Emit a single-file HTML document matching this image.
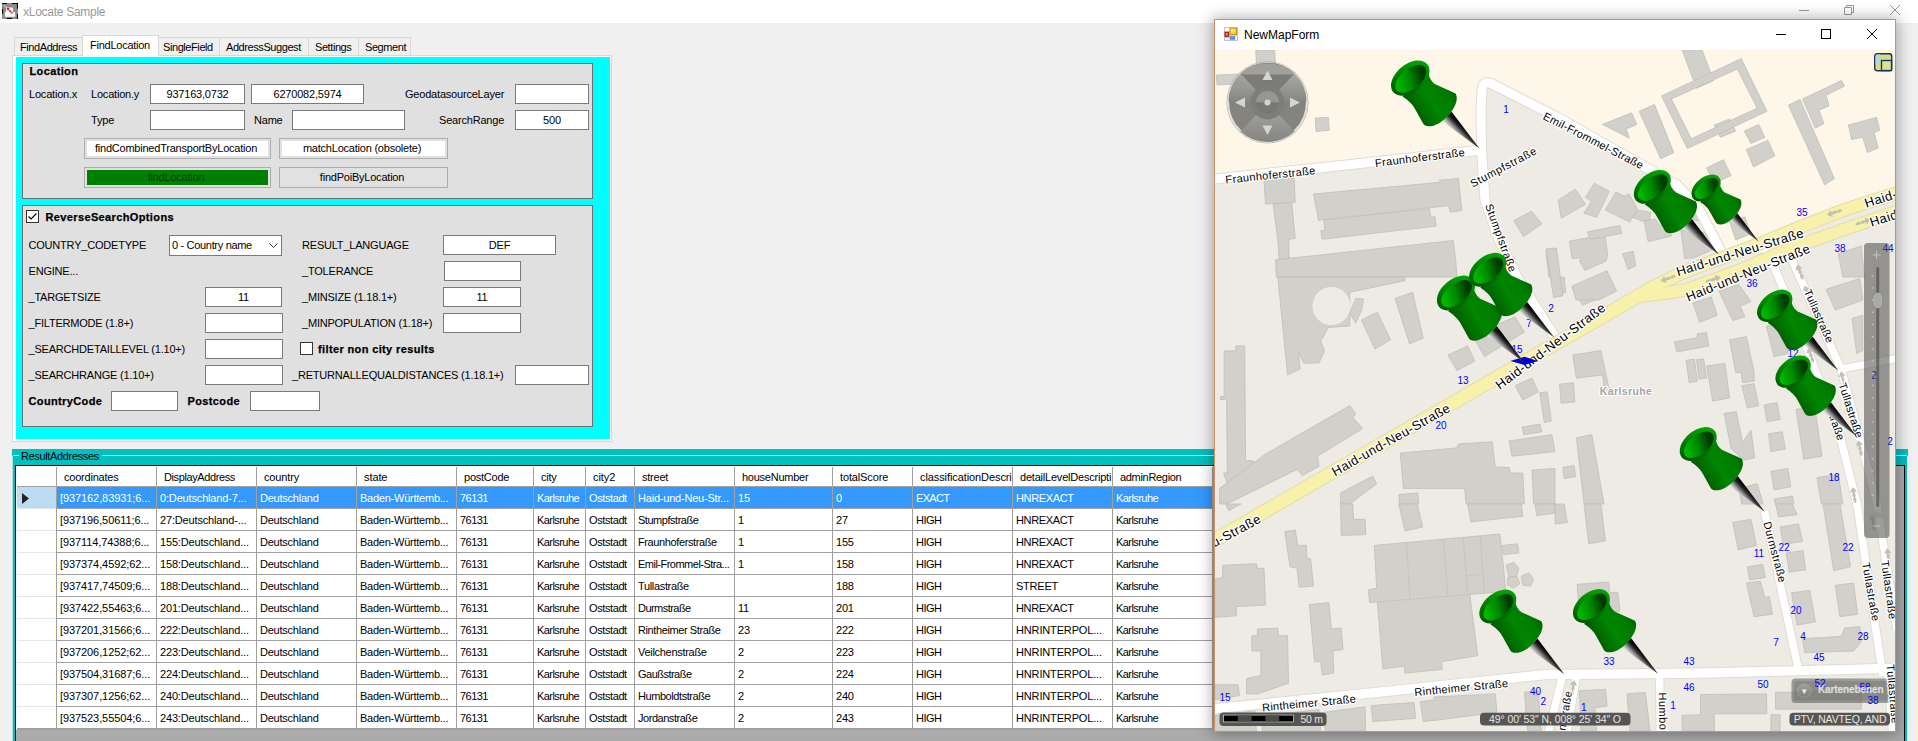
<!DOCTYPE html>
<html><head><meta charset="utf-8"><title>xLocate Sample</title>
<style>
html,body{margin:0;padding:0}
body{width:1918px;height:741px;overflow:hidden;position:relative;background:#f0f0f0;font-family:"Liberation Sans",sans-serif;font-size:11px;color:#000}
.t{position:absolute;white-space:pre;line-height:14px;height:14px;font-size:11px;letter-spacing:-0.2px}
.b{font-weight:bold;letter-spacing:0.37px;-webkit-text-stroke:0.25px #000}
.gb{position:absolute;background:#e0e0e0;border:1px solid #6e6e6e;box-sizing:border-box}
.tb{position:absolute;background:#fff;border:1px solid #7a7a7a;text-align:center;line-height:18px;font-size:11px;letter-spacing:-0.2px;white-space:pre;overflow:hidden}
.btn{position:absolute;background:#e1e1e1;border:1px solid #adadad;box-sizing:border-box;font-size:11px;letter-spacing:-0.22px;white-space:pre}
.cb{position:absolute;width:11px;height:11px;border:1px solid #333;background:#fff}
.hc{position:absolute;background:#fff;overflow:hidden;white-space:pre;letter-spacing:-0.2px}
.hc span{position:absolute;top:4px;line-height:14px}
.rc{position:absolute;overflow:hidden;white-space:pre;letter-spacing:-0.17px}
.rc span{position:absolute;left:3px;top:4px;line-height:14px}
</style></head><body>
<div style="position:absolute;left:0;top:0;width:1918px;height:23px;background:#fff"></div>
<svg style="position:absolute;left:2px;top:3px" width="16" height="16" viewBox="0 0 16 16">
<rect width="16" height="16" fill="#8c8c8c"/>
<path d="M0,0.5 H4.8 M10.1,0.5 H16 M15.5,0 V5.7 M15.5,11.2 V16 M4.9,15.5 H10 M15,15.5 H16 M0.5,6.1 V10.8" stroke="#000" stroke-width="1.1" fill="none"/>
<rect x="2.9" y="9.1" width="10.3" height="4.7" fill="#fff"/><rect x="4.1" y="4.6" width="6.9" height="4.6" fill="#fff"/>
<path d="M2,2.3 L5,5.2" stroke="#e6e6e6" stroke-width="1"/>
<path d="M5.2,5.4 L10.4,10.3" stroke="#e8101c" stroke-width="1.7" stroke-dasharray="2.2 0.7"/><rect x="4.9" y="5" width="2.4" height="1.6" fill="#e8101c"/>
</svg>
<div class="t" style="left:23px;top:5px;font-size:12px;line-height:15px;color:#999;letter-spacing:-0.27px">xLocate Sample</div>
<svg style="position:absolute;left:1790px;top:0" width="120" height="22" viewBox="0 0 120 22" fill="none" stroke="#999" stroke-width="1">
<path d="M9 10.5 H19"/>
<path d="M54.5 7.5 H61.5 V14.5 H54.5 Z M56.5 7.5 V5.5 H63.5 V12.5 H61.5"/>
<path d="M100 5 L110 15 M110 5 L100 15"/></svg>
<div style="position:absolute;left:14px;top:37px;width:69px;height:18px;border:1px solid #d9d9d9;border-bottom:none;box-sizing:border-box;background:#f0f0f0"></div>
<div class="t " style="left:20px;top:39.5px;letter-spacing:-0.42px">FindAddress</div>
<div style="position:absolute;left:158px;top:37px;width:62px;height:18px;border:1px solid #d9d9d9;border-bottom:none;box-sizing:border-box;background:#f0f0f0"></div>
<div class="t " style="left:163px;top:39.5px;letter-spacing:-0.42px">SingleField</div>
<div style="position:absolute;left:219px;top:37px;width:90px;height:18px;border:1px solid #d9d9d9;border-bottom:none;box-sizing:border-box;background:#f0f0f0"></div>
<div class="t " style="left:226px;top:39.5px;letter-spacing:-0.42px">AddressSuggest</div>
<div style="position:absolute;left:308px;top:37px;width:51px;height:18px;border:1px solid #d9d9d9;border-bottom:none;box-sizing:border-box;background:#f0f0f0"></div>
<div class="t " style="left:315px;top:39.5px;letter-spacing:-0.42px">Settings</div>
<div style="position:absolute;left:358px;top:37px;width:53px;height:18px;border:1px solid #d9d9d9;border-bottom:none;box-sizing:border-box;background:#f0f0f0"></div>
<div class="t " style="left:365px;top:39.5px;letter-spacing:-0.42px">Segment</div>
<div style="position:absolute;left:12px;top:55px;width:600px;height:387px;border:1px solid #d9d9d9;box-sizing:border-box;background:#fff"></div>
<div style="position:absolute;left:82px;top:35px;width:77px;height:21px;border:1px solid #d9d9d9;border-bottom:none;box-sizing:border-box;background:#fff"></div>
<div class="t " style="left:90px;top:37.5px;letter-spacing:-0.25px">FindLocation</div>
<div style="position:absolute;left:16px;top:57px;width:594px;height:382px;background:#00ffff"></div>
<div class="gb" style="left:22px;top:63px;width:571px;height:136px"></div>
<div class="gb" style="left:22px;top:205px;width:571px;height:222px"></div>
<div class="t b" style="left:29.5px;top:64px;">Location</div>
<div class="t " style="left:29px;top:87px;">Location.x</div>
<div class="t " style="left:91px;top:87px;">Location.y</div>
<div class="tb" style="left:150px;top:84px;width:93px;height:18px">937163,0732</div>
<div class="tb" style="left:251px;top:84px;width:111px;height:18px">6270082,5974</div>
<div class="t " style="left:405px;top:87px;">GeodatasourceLayer</div>
<div class="tb" style="left:515px;top:84px;width:72px;height:18px"></div>
<div class="t " style="left:91px;top:113px;">Type</div>
<div class="tb" style="left:150px;top:110px;width:93px;height:18px"></div>
<div class="t " style="left:254px;top:113px;">Name</div>
<div class="tb" style="left:292px;top:110px;width:111px;height:18px"></div>
<div class="t " style="left:439px;top:113px;">SearchRange</div>
<div class="tb" style="left:515px;top:110px;width:72px;height:18px">500</div>
<div class="btn" style="left:84px;top:138px;width:187px;height:21px"><div style="position:absolute;left:2px;top:2px;right:2px;bottom:2px;background:#fff;color:#000;text-align:center;line-height:15px;padding-right:3px">findCombinedTransportByLocation</div></div>
<div class="btn" style="left:279px;top:138px;width:169px;height:21px"><div style="position:absolute;left:2px;top:2px;right:2px;bottom:2px;background:#fff;color:#000;text-align:center;line-height:15px;padding-right:3px">matchLocation (obsolete)</div></div>
<div class="btn" style="left:84px;top:167px;width:187px;height:21px"><div style="position:absolute;left:2px;top:2px;right:2px;bottom:2px;background:#008000;color:#003f00;text-align:center;line-height:15px;padding-right:3px">findLocation</div></div>
<div class="btn" style="left:279px;top:167px;width:169px;height:21px"><div style="position:absolute;left:2px;top:2px;right:2px;bottom:2px;background:#e1e1e1;color:#000;text-align:center;line-height:15px;padding-right:3px">findPoiByLocation</div></div>
<div class="cb" style="left:26px;top:210px"><svg width="11" height="11" viewBox="0 0 11 11"><path d="M1.5 5.5 L4 8 L9.5 2.5" fill="none" stroke="#000" stroke-width="1.1"/></svg></div>
<div class="t b" style="left:45.5px;top:210px;">ReverseSearchOptions</div>
<div class="t " style="left:28.5px;top:238px;">COUNTRY_CODETYPE</div>
<div class="tb" style="left:169px;top:235px;width:111px;height:19px;text-align:left"><span style="position:absolute;left:2px;top:0;letter-spacing:-0.32px">0 - Country name</span><svg style="position:absolute;right:3px;top:7px" width="9" height="6" viewBox="0 0 9 6"><path d="M0.5 0.5 L4.5 4.5 L8.5 0.5" fill="none" stroke="#333" stroke-width="1"/></svg></div>
<div class="t " style="left:302px;top:238px;">RESULT_LANGUAGE</div>
<div class="tb" style="left:443px;top:235px;width:111px;height:18px">DEF</div>
<div class="t " style="left:28.5px;top:264px;">ENGINE...</div>
<div class="t " style="left:302px;top:264px;">_TOLERANCE</div>
<div class="tb" style="left:444px;top:261px;width:75px;height:18px"></div>
<div class="t " style="left:28.5px;top:290px;">_TARGETSIZE</div>
<div class="tb" style="left:205px;top:287px;width:75px;height:18px">11</div>
<div class="t " style="left:302px;top:290px;">_MINSIZE (1.18.1+)</div>
<div class="tb" style="left:443px;top:287px;width:76px;height:18px">11</div>
<div class="t " style="left:28.5px;top:316px;">_FILTERMODE (1.8+)</div>
<div class="tb" style="left:205px;top:313px;width:76px;height:18px"></div>
<div class="t " style="left:302px;top:316px;">_MINPOPULATION (1.18+)</div>
<div class="tb" style="left:443px;top:313px;width:76px;height:18px"></div>
<div class="t " style="left:28.5px;top:342px;">_SEARCHDETAILLEVEL (1.10+)</div>
<div class="tb" style="left:205px;top:339px;width:76px;height:18px"></div>
<div class="cb" style="left:300px;top:342px"></div>
<div class="t b" style="left:318px;top:342px;">filter non city results</div>
<div class="t " style="left:28.5px;top:368px;">_SEARCHRANGE (1.10+)</div>
<div class="tb" style="left:205px;top:365px;width:76px;height:18px"></div>
<div class="t " style="left:292px;top:368px;">_RETURNALLEQUALDISTANCES (1.18.1+)</div>
<div class="tb" style="left:515px;top:365px;width:72px;height:18px"></div>
<div class="t b" style="left:28.5px;top:394px;">CountryCode</div>
<div class="tb" style="left:111px;top:391px;width:65px;height:18px"></div>
<div class="t b" style="left:187.5px;top:394px;">Postcode</div>
<div class="tb" style="left:250px;top:391px;width:68px;height:18px"></div>
<div style="position:absolute;left:12px;top:449px;width:1896px;height:7px;background:#00c0c0"></div>
<div style="position:absolute;left:13px;top:455px;width:1894px;height:286px;background:#00c0c0"></div>
<div style="position:absolute;left:13px;top:455px;width:1894px;height:1px;background:#d8dede"></div>
<div style="position:absolute;left:12px;top:456px;width:1px;height:285px;background:#a8e2e2"></div>
<div style="position:absolute;left:19px;top:449px;width:83px;height:13px;background:#00c0c0"></div>
<div class="t " style="left:21px;top:449px;letter-spacing:-0.35px">ResultAddresses</div>
<div style="position:absolute;left:15px;top:465px;width:1890px;height:276px;background:#ababab;border:1px solid #000;border-bottom:none;box-sizing:border-box"></div>
<div style="position:absolute;left:16px;top:466px;width:1197px;height:264px;background:#a0a0a0"></div>
<div style="position:absolute;left:17px;top:466px;width:1196px;height:1px;background:#fff;z-index:2"></div>
<div class="hc" style="left:17px;top:466px;width:39px;height:20px"><span style="left:0px;letter-spacing:-0.2px"></span></div>
<div class="hc" style="left:57px;top:466px;width:99px;height:20px"><span style="left:7px;letter-spacing:-0.21px">coordinates</span></div>
<div class="hc" style="left:157px;top:466px;width:99px;height:20px"><span style="left:7px;letter-spacing:-0.39px">DisplayAddress</span></div>
<div class="hc" style="left:257px;top:466px;width:99px;height:20px"><span style="left:7px;letter-spacing:-0.13px">country</span></div>
<div class="hc" style="left:357px;top:466px;width:99px;height:20px"><span style="left:7px;letter-spacing:-0.09px">state</span></div>
<div class="hc" style="left:457px;top:466px;width:76px;height:20px"><span style="left:7px;letter-spacing:-0.23px">postCode</span></div>
<div class="hc" style="left:534px;top:466px;width:51px;height:20px"><span style="left:7px;letter-spacing:-0.23px">city</span></div>
<div class="hc" style="left:586px;top:466px;width:48px;height:20px"><span style="left:7px;letter-spacing:-0.08px">city2</span></div>
<div class="hc" style="left:635px;top:466px;width:99px;height:20px"><span style="left:7px;letter-spacing:-0.22px">street</span></div>
<div class="hc" style="left:735px;top:466px;width:97px;height:20px"><span style="left:7px;letter-spacing:-0.25px">houseNumber</span></div>
<div class="hc" style="left:833px;top:466px;width:79px;height:20px"><span style="left:7px;letter-spacing:-0.14px">totalScore</span></div>
<div class="hc" style="left:913px;top:466px;width:99px;height:20px"><span style="left:7px;letter-spacing:-0.09px">classificationDescri</span></div>
<div class="hc" style="left:1013px;top:466px;width:99px;height:20px"><span style="left:7px;letter-spacing:-0.21px">detailLevelDescripti</span></div>
<div class="hc" style="left:1113px;top:466px;width:99px;height:20px"><span style="left:7px;letter-spacing:-0.31px">adminRegion</span></div>
<div style="position:absolute;left:16px;top:466px;width:1px;height:264px;background:#fff"></div>
<div class="rc" style="left:17px;top:487px;width:39px;height:21px;background:#bcdcf4;border-bottom:1px solid #e6e6e6"></div>
<div class="rc" style="left:57px;top:487px;width:99px;height:21px;background:#3399ff;color:#fff"><span style="letter-spacing:-0.09px">[937162,83931;6...</span></div>
<div class="rc" style="left:157px;top:487px;width:99px;height:21px;background:#3399ff;color:#fff"><span style="letter-spacing:-0.16px">0:Deutschland-7...</span></div>
<div class="rc" style="left:257px;top:487px;width:99px;height:21px;background:#3399ff;color:#fff"><span style="letter-spacing:-0.23px">Deutschland</span></div>
<div class="rc" style="left:357px;top:487px;width:99px;height:21px;background:#3399ff;color:#fff"><span style="letter-spacing:-0.24px">Baden-Württemb...</span></div>
<div class="rc" style="left:457px;top:487px;width:76px;height:21px;background:#3399ff;color:#fff"><span style="letter-spacing:-0.55px">76131</span></div>
<div class="rc" style="left:534px;top:487px;width:51px;height:21px;background:#3399ff;color:#fff"><span style="letter-spacing:-0.56px">Karlsruhe</span></div>
<div class="rc" style="left:586px;top:487px;width:48px;height:21px;background:#3399ff;color:#fff"><span style="letter-spacing:-0.4px">Oststadt</span></div>
<div class="rc" style="left:635px;top:487px;width:99px;height:21px;background:#3399ff;color:#fff"><span style="letter-spacing:-0.21px">Haid-und-Neu-Str...</span></div>
<div class="rc" style="left:735px;top:487px;width:97px;height:21px;background:#3399ff;color:#fff"><span style="letter-spacing:-0.2px">15</span></div>
<div class="rc" style="left:833px;top:487px;width:79px;height:21px;background:#3399ff;color:#fff"><span style="letter-spacing:-0.2px">0</span></div>
<div class="rc" style="left:913px;top:487px;width:99px;height:21px;background:#3399ff;color:#fff"><span style="letter-spacing:-0.65px">EXACT</span></div>
<div class="rc" style="left:1013px;top:487px;width:99px;height:21px;background:#3399ff;color:#fff"><span style="letter-spacing:-0.35px">HNREXACT</span></div>
<div class="rc" style="left:1113px;top:487px;width:99px;height:21px;background:#3399ff;color:#fff"><span style="letter-spacing:-0.56px">Karlsruhe</span></div>
<div class="rc" style="left:17px;top:509px;width:39px;height:21px;background:#fff;border-bottom:1px solid #e6e6e6"></div>
<div class="rc" style="left:57px;top:509px;width:99px;height:21px;background:#fff;color:#000"><span style="letter-spacing:-0.09px">[937196,50611;6...</span></div>
<div class="rc" style="left:157px;top:509px;width:99px;height:21px;background:#fff;color:#000"><span style="letter-spacing:-0.16px">27:Deutschland-...</span></div>
<div class="rc" style="left:257px;top:509px;width:99px;height:21px;background:#fff;color:#000"><span style="letter-spacing:-0.23px">Deutschland</span></div>
<div class="rc" style="left:357px;top:509px;width:99px;height:21px;background:#fff;color:#000"><span style="letter-spacing:-0.24px">Baden-Württemb...</span></div>
<div class="rc" style="left:457px;top:509px;width:76px;height:21px;background:#fff;color:#000"><span style="letter-spacing:-0.55px">76131</span></div>
<div class="rc" style="left:534px;top:509px;width:51px;height:21px;background:#fff;color:#000"><span style="letter-spacing:-0.56px">Karlsruhe</span></div>
<div class="rc" style="left:586px;top:509px;width:48px;height:21px;background:#fff;color:#000"><span style="letter-spacing:-0.4px">Oststadt</span></div>
<div class="rc" style="left:635px;top:509px;width:99px;height:21px;background:#fff;color:#000"><span style="letter-spacing:-0.47px">Stumpfstraße</span></div>
<div class="rc" style="left:735px;top:509px;width:97px;height:21px;background:#fff;color:#000"><span style="letter-spacing:-0.2px">1</span></div>
<div class="rc" style="left:833px;top:509px;width:79px;height:21px;background:#fff;color:#000"><span style="letter-spacing:-0.2px">27</span></div>
<div class="rc" style="left:913px;top:509px;width:99px;height:21px;background:#fff;color:#000"><span style="letter-spacing:-0.5px">HIGH</span></div>
<div class="rc" style="left:1013px;top:509px;width:99px;height:21px;background:#fff;color:#000"><span style="letter-spacing:-0.35px">HNREXACT</span></div>
<div class="rc" style="left:1113px;top:509px;width:99px;height:21px;background:#fff;color:#000"><span style="letter-spacing:-0.56px">Karlsruhe</span></div>
<div class="rc" style="left:17px;top:531px;width:39px;height:21px;background:#fff;border-bottom:1px solid #e6e6e6"></div>
<div class="rc" style="left:57px;top:531px;width:99px;height:21px;background:#fff;color:#000"><span style="letter-spacing:-0.09px">[937114,74388;6...</span></div>
<div class="rc" style="left:157px;top:531px;width:99px;height:21px;background:#fff;color:#000"><span style="letter-spacing:-0.16px">155:Deutschland...</span></div>
<div class="rc" style="left:257px;top:531px;width:99px;height:21px;background:#fff;color:#000"><span style="letter-spacing:-0.23px">Deutschland</span></div>
<div class="rc" style="left:357px;top:531px;width:99px;height:21px;background:#fff;color:#000"><span style="letter-spacing:-0.24px">Baden-Württemb...</span></div>
<div class="rc" style="left:457px;top:531px;width:76px;height:21px;background:#fff;color:#000"><span style="letter-spacing:-0.55px">76131</span></div>
<div class="rc" style="left:534px;top:531px;width:51px;height:21px;background:#fff;color:#000"><span style="letter-spacing:-0.56px">Karlsruhe</span></div>
<div class="rc" style="left:586px;top:531px;width:48px;height:21px;background:#fff;color:#000"><span style="letter-spacing:-0.4px">Oststadt</span></div>
<div class="rc" style="left:635px;top:531px;width:99px;height:21px;background:#fff;color:#000"><span style="letter-spacing:-0.39px">Fraunhoferstraße</span></div>
<div class="rc" style="left:735px;top:531px;width:97px;height:21px;background:#fff;color:#000"><span style="letter-spacing:-0.2px">1</span></div>
<div class="rc" style="left:833px;top:531px;width:79px;height:21px;background:#fff;color:#000"><span style="letter-spacing:-0.2px">155</span></div>
<div class="rc" style="left:913px;top:531px;width:99px;height:21px;background:#fff;color:#000"><span style="letter-spacing:-0.5px">HIGH</span></div>
<div class="rc" style="left:1013px;top:531px;width:99px;height:21px;background:#fff;color:#000"><span style="letter-spacing:-0.35px">HNREXACT</span></div>
<div class="rc" style="left:1113px;top:531px;width:99px;height:21px;background:#fff;color:#000"><span style="letter-spacing:-0.56px">Karlsruhe</span></div>
<div class="rc" style="left:17px;top:553px;width:39px;height:21px;background:#fff;border-bottom:1px solid #e6e6e6"></div>
<div class="rc" style="left:57px;top:553px;width:99px;height:21px;background:#fff;color:#000"><span style="letter-spacing:-0.09px">[937374,4592;62...</span></div>
<div class="rc" style="left:157px;top:553px;width:99px;height:21px;background:#fff;color:#000"><span style="letter-spacing:-0.16px">158:Deutschland...</span></div>
<div class="rc" style="left:257px;top:553px;width:99px;height:21px;background:#fff;color:#000"><span style="letter-spacing:-0.23px">Deutschland</span></div>
<div class="rc" style="left:357px;top:553px;width:99px;height:21px;background:#fff;color:#000"><span style="letter-spacing:-0.24px">Baden-Württemb...</span></div>
<div class="rc" style="left:457px;top:553px;width:76px;height:21px;background:#fff;color:#000"><span style="letter-spacing:-0.55px">76131</span></div>
<div class="rc" style="left:534px;top:553px;width:51px;height:21px;background:#fff;color:#000"><span style="letter-spacing:-0.56px">Karlsruhe</span></div>
<div class="rc" style="left:586px;top:553px;width:48px;height:21px;background:#fff;color:#000"><span style="letter-spacing:-0.4px">Oststadt</span></div>
<div class="rc" style="left:635px;top:553px;width:99px;height:21px;background:#fff;color:#000"><span style="letter-spacing:-0.51px">Emil-Frommel-Stra...</span></div>
<div class="rc" style="left:735px;top:553px;width:97px;height:21px;background:#fff;color:#000"><span style="letter-spacing:-0.2px">1</span></div>
<div class="rc" style="left:833px;top:553px;width:79px;height:21px;background:#fff;color:#000"><span style="letter-spacing:-0.2px">158</span></div>
<div class="rc" style="left:913px;top:553px;width:99px;height:21px;background:#fff;color:#000"><span style="letter-spacing:-0.5px">HIGH</span></div>
<div class="rc" style="left:1013px;top:553px;width:99px;height:21px;background:#fff;color:#000"><span style="letter-spacing:-0.35px">HNREXACT</span></div>
<div class="rc" style="left:1113px;top:553px;width:99px;height:21px;background:#fff;color:#000"><span style="letter-spacing:-0.56px">Karlsruhe</span></div>
<div class="rc" style="left:17px;top:575px;width:39px;height:21px;background:#fff;border-bottom:1px solid #e6e6e6"></div>
<div class="rc" style="left:57px;top:575px;width:99px;height:21px;background:#fff;color:#000"><span style="letter-spacing:-0.09px">[937417,74509;6...</span></div>
<div class="rc" style="left:157px;top:575px;width:99px;height:21px;background:#fff;color:#000"><span style="letter-spacing:-0.16px">188:Deutschland...</span></div>
<div class="rc" style="left:257px;top:575px;width:99px;height:21px;background:#fff;color:#000"><span style="letter-spacing:-0.23px">Deutschland</span></div>
<div class="rc" style="left:357px;top:575px;width:99px;height:21px;background:#fff;color:#000"><span style="letter-spacing:-0.24px">Baden-Württemb...</span></div>
<div class="rc" style="left:457px;top:575px;width:76px;height:21px;background:#fff;color:#000"><span style="letter-spacing:-0.55px">76131</span></div>
<div class="rc" style="left:534px;top:575px;width:51px;height:21px;background:#fff;color:#000"><span style="letter-spacing:-0.56px">Karlsruhe</span></div>
<div class="rc" style="left:586px;top:575px;width:48px;height:21px;background:#fff;color:#000"><span style="letter-spacing:-0.4px">Oststadt</span></div>
<div class="rc" style="left:635px;top:575px;width:99px;height:21px;background:#fff;color:#000"><span style="letter-spacing:-0.34px">Tullastraße</span></div>
<div class="rc" style="left:735px;top:575px;width:97px;height:21px;background:#fff;color:#000"><span style="letter-spacing:-0.2px"></span></div>
<div class="rc" style="left:833px;top:575px;width:79px;height:21px;background:#fff;color:#000"><span style="letter-spacing:-0.2px">188</span></div>
<div class="rc" style="left:913px;top:575px;width:99px;height:21px;background:#fff;color:#000"><span style="letter-spacing:-0.5px">HIGH</span></div>
<div class="rc" style="left:1013px;top:575px;width:99px;height:21px;background:#fff;color:#000"><span style="letter-spacing:-0.24px">STREET</span></div>
<div class="rc" style="left:1113px;top:575px;width:99px;height:21px;background:#fff;color:#000"><span style="letter-spacing:-0.56px">Karlsruhe</span></div>
<div class="rc" style="left:17px;top:597px;width:39px;height:21px;background:#fff;border-bottom:1px solid #e6e6e6"></div>
<div class="rc" style="left:57px;top:597px;width:99px;height:21px;background:#fff;color:#000"><span style="letter-spacing:-0.09px">[937422,55463;6...</span></div>
<div class="rc" style="left:157px;top:597px;width:99px;height:21px;background:#fff;color:#000"><span style="letter-spacing:-0.16px">201:Deutschland...</span></div>
<div class="rc" style="left:257px;top:597px;width:99px;height:21px;background:#fff;color:#000"><span style="letter-spacing:-0.23px">Deutschland</span></div>
<div class="rc" style="left:357px;top:597px;width:99px;height:21px;background:#fff;color:#000"><span style="letter-spacing:-0.24px">Baden-Württemb...</span></div>
<div class="rc" style="left:457px;top:597px;width:76px;height:21px;background:#fff;color:#000"><span style="letter-spacing:-0.55px">76131</span></div>
<div class="rc" style="left:534px;top:597px;width:51px;height:21px;background:#fff;color:#000"><span style="letter-spacing:-0.56px">Karlsruhe</span></div>
<div class="rc" style="left:586px;top:597px;width:48px;height:21px;background:#fff;color:#000"><span style="letter-spacing:-0.4px">Oststadt</span></div>
<div class="rc" style="left:635px;top:597px;width:99px;height:21px;background:#fff;color:#000"><span style="letter-spacing:-0.54px">Durmstraße</span></div>
<div class="rc" style="left:735px;top:597px;width:97px;height:21px;background:#fff;color:#000"><span style="letter-spacing:-0.2px">11</span></div>
<div class="rc" style="left:833px;top:597px;width:79px;height:21px;background:#fff;color:#000"><span style="letter-spacing:-0.2px">201</span></div>
<div class="rc" style="left:913px;top:597px;width:99px;height:21px;background:#fff;color:#000"><span style="letter-spacing:-0.5px">HIGH</span></div>
<div class="rc" style="left:1013px;top:597px;width:99px;height:21px;background:#fff;color:#000"><span style="letter-spacing:-0.35px">HNREXACT</span></div>
<div class="rc" style="left:1113px;top:597px;width:99px;height:21px;background:#fff;color:#000"><span style="letter-spacing:-0.56px">Karlsruhe</span></div>
<div class="rc" style="left:17px;top:619px;width:39px;height:21px;background:#fff;border-bottom:1px solid #e6e6e6"></div>
<div class="rc" style="left:57px;top:619px;width:99px;height:21px;background:#fff;color:#000"><span style="letter-spacing:-0.09px">[937201,31566;6...</span></div>
<div class="rc" style="left:157px;top:619px;width:99px;height:21px;background:#fff;color:#000"><span style="letter-spacing:-0.16px">222:Deutschland...</span></div>
<div class="rc" style="left:257px;top:619px;width:99px;height:21px;background:#fff;color:#000"><span style="letter-spacing:-0.23px">Deutschland</span></div>
<div class="rc" style="left:357px;top:619px;width:99px;height:21px;background:#fff;color:#000"><span style="letter-spacing:-0.24px">Baden-Württemb...</span></div>
<div class="rc" style="left:457px;top:619px;width:76px;height:21px;background:#fff;color:#000"><span style="letter-spacing:-0.55px">76131</span></div>
<div class="rc" style="left:534px;top:619px;width:51px;height:21px;background:#fff;color:#000"><span style="letter-spacing:-0.56px">Karlsruhe</span></div>
<div class="rc" style="left:586px;top:619px;width:48px;height:21px;background:#fff;color:#000"><span style="letter-spacing:-0.4px">Oststadt</span></div>
<div class="rc" style="left:635px;top:619px;width:99px;height:21px;background:#fff;color:#000"><span style="letter-spacing:-0.4px">Rintheimer Straße</span></div>
<div class="rc" style="left:735px;top:619px;width:97px;height:21px;background:#fff;color:#000"><span style="letter-spacing:-0.2px">23</span></div>
<div class="rc" style="left:833px;top:619px;width:79px;height:21px;background:#fff;color:#000"><span style="letter-spacing:-0.2px">222</span></div>
<div class="rc" style="left:913px;top:619px;width:99px;height:21px;background:#fff;color:#000"><span style="letter-spacing:-0.5px">HIGH</span></div>
<div class="rc" style="left:1013px;top:619px;width:99px;height:21px;background:#fff;color:#000"><span style="letter-spacing:-0.15px">HNRINTERPOL...</span></div>
<div class="rc" style="left:1113px;top:619px;width:99px;height:21px;background:#fff;color:#000"><span style="letter-spacing:-0.56px">Karlsruhe</span></div>
<div class="rc" style="left:17px;top:641px;width:39px;height:21px;background:#fff;border-bottom:1px solid #e6e6e6"></div>
<div class="rc" style="left:57px;top:641px;width:99px;height:21px;background:#fff;color:#000"><span style="letter-spacing:-0.09px">[937206,1252;62...</span></div>
<div class="rc" style="left:157px;top:641px;width:99px;height:21px;background:#fff;color:#000"><span style="letter-spacing:-0.16px">223:Deutschland...</span></div>
<div class="rc" style="left:257px;top:641px;width:99px;height:21px;background:#fff;color:#000"><span style="letter-spacing:-0.23px">Deutschland</span></div>
<div class="rc" style="left:357px;top:641px;width:99px;height:21px;background:#fff;color:#000"><span style="letter-spacing:-0.24px">Baden-Württemb...</span></div>
<div class="rc" style="left:457px;top:641px;width:76px;height:21px;background:#fff;color:#000"><span style="letter-spacing:-0.55px">76131</span></div>
<div class="rc" style="left:534px;top:641px;width:51px;height:21px;background:#fff;color:#000"><span style="letter-spacing:-0.56px">Karlsruhe</span></div>
<div class="rc" style="left:586px;top:641px;width:48px;height:21px;background:#fff;color:#000"><span style="letter-spacing:-0.4px">Oststadt</span></div>
<div class="rc" style="left:635px;top:641px;width:99px;height:21px;background:#fff;color:#000"><span style="letter-spacing:-0.29px">Veilchenstraße</span></div>
<div class="rc" style="left:735px;top:641px;width:97px;height:21px;background:#fff;color:#000"><span style="letter-spacing:-0.2px">2</span></div>
<div class="rc" style="left:833px;top:641px;width:79px;height:21px;background:#fff;color:#000"><span style="letter-spacing:-0.2px">223</span></div>
<div class="rc" style="left:913px;top:641px;width:99px;height:21px;background:#fff;color:#000"><span style="letter-spacing:-0.5px">HIGH</span></div>
<div class="rc" style="left:1013px;top:641px;width:99px;height:21px;background:#fff;color:#000"><span style="letter-spacing:-0.15px">HNRINTERPOL...</span></div>
<div class="rc" style="left:1113px;top:641px;width:99px;height:21px;background:#fff;color:#000"><span style="letter-spacing:-0.56px">Karlsruhe</span></div>
<div class="rc" style="left:17px;top:663px;width:39px;height:21px;background:#fff;border-bottom:1px solid #e6e6e6"></div>
<div class="rc" style="left:57px;top:663px;width:99px;height:21px;background:#fff;color:#000"><span style="letter-spacing:-0.09px">[937504,31687;6...</span></div>
<div class="rc" style="left:157px;top:663px;width:99px;height:21px;background:#fff;color:#000"><span style="letter-spacing:-0.16px">224:Deutschland...</span></div>
<div class="rc" style="left:257px;top:663px;width:99px;height:21px;background:#fff;color:#000"><span style="letter-spacing:-0.23px">Deutschland</span></div>
<div class="rc" style="left:357px;top:663px;width:99px;height:21px;background:#fff;color:#000"><span style="letter-spacing:-0.24px">Baden-Württemb...</span></div>
<div class="rc" style="left:457px;top:663px;width:76px;height:21px;background:#fff;color:#000"><span style="letter-spacing:-0.55px">76131</span></div>
<div class="rc" style="left:534px;top:663px;width:51px;height:21px;background:#fff;color:#000"><span style="letter-spacing:-0.56px">Karlsruhe</span></div>
<div class="rc" style="left:586px;top:663px;width:48px;height:21px;background:#fff;color:#000"><span style="letter-spacing:-0.4px">Oststadt</span></div>
<div class="rc" style="left:635px;top:663px;width:99px;height:21px;background:#fff;color:#000"><span style="letter-spacing:-0.52px">Gaußstraße</span></div>
<div class="rc" style="left:735px;top:663px;width:97px;height:21px;background:#fff;color:#000"><span style="letter-spacing:-0.2px">2</span></div>
<div class="rc" style="left:833px;top:663px;width:79px;height:21px;background:#fff;color:#000"><span style="letter-spacing:-0.2px">224</span></div>
<div class="rc" style="left:913px;top:663px;width:99px;height:21px;background:#fff;color:#000"><span style="letter-spacing:-0.5px">HIGH</span></div>
<div class="rc" style="left:1013px;top:663px;width:99px;height:21px;background:#fff;color:#000"><span style="letter-spacing:-0.15px">HNRINTERPOL...</span></div>
<div class="rc" style="left:1113px;top:663px;width:99px;height:21px;background:#fff;color:#000"><span style="letter-spacing:-0.56px">Karlsruhe</span></div>
<div class="rc" style="left:17px;top:685px;width:39px;height:21px;background:#fff;border-bottom:1px solid #e6e6e6"></div>
<div class="rc" style="left:57px;top:685px;width:99px;height:21px;background:#fff;color:#000"><span style="letter-spacing:-0.09px">[937307,1256;62...</span></div>
<div class="rc" style="left:157px;top:685px;width:99px;height:21px;background:#fff;color:#000"><span style="letter-spacing:-0.16px">240:Deutschland...</span></div>
<div class="rc" style="left:257px;top:685px;width:99px;height:21px;background:#fff;color:#000"><span style="letter-spacing:-0.23px">Deutschland</span></div>
<div class="rc" style="left:357px;top:685px;width:99px;height:21px;background:#fff;color:#000"><span style="letter-spacing:-0.24px">Baden-Württemb...</span></div>
<div class="rc" style="left:457px;top:685px;width:76px;height:21px;background:#fff;color:#000"><span style="letter-spacing:-0.55px">76131</span></div>
<div class="rc" style="left:534px;top:685px;width:51px;height:21px;background:#fff;color:#000"><span style="letter-spacing:-0.56px">Karlsruhe</span></div>
<div class="rc" style="left:586px;top:685px;width:48px;height:21px;background:#fff;color:#000"><span style="letter-spacing:-0.4px">Oststadt</span></div>
<div class="rc" style="left:635px;top:685px;width:99px;height:21px;background:#fff;color:#000"><span style="letter-spacing:-0.43px">Humboldtstraße</span></div>
<div class="rc" style="left:735px;top:685px;width:97px;height:21px;background:#fff;color:#000"><span style="letter-spacing:-0.2px">2</span></div>
<div class="rc" style="left:833px;top:685px;width:79px;height:21px;background:#fff;color:#000"><span style="letter-spacing:-0.2px">240</span></div>
<div class="rc" style="left:913px;top:685px;width:99px;height:21px;background:#fff;color:#000"><span style="letter-spacing:-0.5px">HIGH</span></div>
<div class="rc" style="left:1013px;top:685px;width:99px;height:21px;background:#fff;color:#000"><span style="letter-spacing:-0.15px">HNRINTERPOL...</span></div>
<div class="rc" style="left:1113px;top:685px;width:99px;height:21px;background:#fff;color:#000"><span style="letter-spacing:-0.56px">Karlsruhe</span></div>
<div class="rc" style="left:17px;top:707px;width:39px;height:21px;background:#fff;border-bottom:1px solid #a0a0a0"></div>
<div class="rc" style="left:57px;top:707px;width:99px;height:21px;background:#fff;color:#000"><span style="letter-spacing:-0.09px">[937523,55504;6...</span></div>
<div class="rc" style="left:157px;top:707px;width:99px;height:21px;background:#fff;color:#000"><span style="letter-spacing:-0.16px">243:Deutschland...</span></div>
<div class="rc" style="left:257px;top:707px;width:99px;height:21px;background:#fff;color:#000"><span style="letter-spacing:-0.23px">Deutschland</span></div>
<div class="rc" style="left:357px;top:707px;width:99px;height:21px;background:#fff;color:#000"><span style="letter-spacing:-0.24px">Baden-Württemb...</span></div>
<div class="rc" style="left:457px;top:707px;width:76px;height:21px;background:#fff;color:#000"><span style="letter-spacing:-0.55px">76131</span></div>
<div class="rc" style="left:534px;top:707px;width:51px;height:21px;background:#fff;color:#000"><span style="letter-spacing:-0.56px">Karlsruhe</span></div>
<div class="rc" style="left:586px;top:707px;width:48px;height:21px;background:#fff;color:#000"><span style="letter-spacing:-0.4px">Oststadt</span></div>
<div class="rc" style="left:635px;top:707px;width:99px;height:21px;background:#fff;color:#000"><span style="letter-spacing:-0.46px">Jordanstraße</span></div>
<div class="rc" style="left:735px;top:707px;width:97px;height:21px;background:#fff;color:#000"><span style="letter-spacing:-0.2px">2</span></div>
<div class="rc" style="left:833px;top:707px;width:79px;height:21px;background:#fff;color:#000"><span style="letter-spacing:-0.2px">243</span></div>
<div class="rc" style="left:913px;top:707px;width:99px;height:21px;background:#fff;color:#000"><span style="letter-spacing:-0.5px">HIGH</span></div>
<div class="rc" style="left:1013px;top:707px;width:99px;height:21px;background:#fff;color:#000"><span style="letter-spacing:-0.15px">HNRINTERPOL...</span></div>
<div class="rc" style="left:1113px;top:707px;width:99px;height:21px;background:#fff;color:#000"><span style="letter-spacing:-0.56px">Karlsruhe</span></div>
<svg style="position:absolute;left:22px;top:493px" width="8" height="11" viewBox="0 0 8 11"><path d="M0 0 L7 5.5 L0 11 Z" fill="#222"/></svg><div style="position:absolute;left:1214px;top:19px;width:682px;height:713px;box-sizing:border-box;border:1px solid #cf9068;background:#fff;box-shadow:0 1px 14px 2px rgba(0,0,0,0.32)"></div>
<svg style="position:absolute;left:1224px;top:27px" width="14" height="14" viewBox="0 0 14 14">
<defs><linearGradient id="gy" x1="0" y1="0" x2="0.6" y2="1"><stop offset="0" stop-color="#fff4b0"/><stop offset="1" stop-color="#ffc818"/></linearGradient></defs>
<rect x="0.5" y="0.5" width="13" height="13" fill="#fff" stroke="#c2c2c2"/>
<path d="M5.3,0.5 V13.5 M5.3,8.5 H13.5 M11.7,8.5 V13.5 M3.7,10.2 V13.5 M0.5,10.2 H5.3" stroke="#cfcfcf" stroke-width="0.8" fill="none"/>
<rect x="6.1" y="1.2" width="6.4" height="6.3" fill="url(#gy)" stroke="#c4960f" stroke-width="1"/>
<rect x="1" y="5" width="3.8" height="4.7" fill="#dc3424" stroke="#9a1608" stroke-width="0.8"/><rect x="2" y="6.1" width="1.5" height="2.2" fill="#f4988a"/>
<rect x="5.9" y="9.1" width="5" height="3.6" fill="#4a7ee0"/><rect x="6.9" y="9.9" width="2.6" height="1.4" fill="#80acf6"/>
</svg>
<div class="t" style="left:1244px;top:28px;font-size:12px;line-height:15px;letter-spacing:0">NewMapForm</div>
<svg style="position:absolute;left:1770px;top:24px" width="115" height="20" viewBox="0 0 115 20" fill="none" stroke="#000" stroke-width="1">
<path d="M6 10.5 H16"/><rect x="51.5" y="5.5" width="9" height="9"/><path d="M97 5 L107 15 M107 5 L97 15"/></svg>
<svg style="position:absolute;left:1215px;top:50px" width="680" height="681" viewBox="0 0 680 681" font-family="Liberation Sans, sans-serif">
<defs>
<linearGradient id="gBody" gradientUnits="userSpaceOnUse" x1="-66" y1="-38" x2="-28" y2="-62"><stop offset="0" stop-color="#005c00"/><stop offset="0.45" stop-color="#008600"/><stop offset="0.8" stop-color="#007c00"/><stop offset="1" stop-color="#006400"/></linearGradient>
<linearGradient id="gRim" gradientUnits="userSpaceOnUse" x1="-80" y1="-56" x2="-55" y2="-80"><stop offset="0" stop-color="#005800"/><stop offset="1" stop-color="#00a400"/></linearGradient>
<linearGradient id="gIn" gradientUnits="userSpaceOnUse" x1="-79" y1="-72" x2="-56" y2="-62"><stop offset="0" stop-color="#00b800"/><stop offset="0.5" stop-color="#008a00"/><stop offset="1" stop-color="#003c00"/></linearGradient>
<linearGradient id="gNeedle" gradientUnits="userSpaceOnUse" x1="-22" y1="-11.5" x2="-12.5" y2="-20.5"><stop offset="0" stop-color="#f2f2f2" stop-opacity="0.85"/><stop offset="0.3" stop-color="#a0a0a0"/><stop offset="0.62" stop-color="#2a2a2a"/><stop offset="0.85" stop-color="#000"/></linearGradient>
<g id="pin">
<path d="M-35.8,-26.2 L-27,-35.6 L0,0 Z" fill="url(#gNeedle)"/>
<path d="M-74,-50 C-68,-46 -64,-42 -62,-38 L-54.5,-24.5 C-52,-19 -42,-21 -34,-28 C-26,-35 -19,-46 -23,-53 L-43,-62 C-47,-65 -49,-70 -49.5,-74 Z" fill="url(#gBody)"/>
<ellipse cx="-66.6" cy="-67.7" rx="21.2" ry="13.4" transform="rotate(-39 -66.6 -67.7)" fill="url(#gRim)"/>
<ellipse cx="-66" cy="-67" rx="17.5" ry="9.6" transform="rotate(-39 -66 -67)" fill="url(#gIn)"/>
</g>
<linearGradient id="gNav" x1="0" y1="0" x2="0" y2="1"><stop offset="0" stop-color="#a4a4a0"/><stop offset="1" stop-color="#7c7c7a"/></linearGradient>
</defs>
<rect width="680" height="681" fill="#eeebe4"/>
<polygon points="0,0 680,0 680,138 620,156 560,180 516,203 505,198 484,159 462,135 340,66 269,29 266,60 266,98 262,100 131,115 0,129" fill="#fef7e9"/>
<polygon points="40.7,0.0 59.7,0.0 60.3,13.8 41.4,13.8" fill="#d2d0ca" stroke="#c0beb8" stroke-width="0.8"/>
<polygon points="1.2,25.1 27.0,23.9 27.6,33.7 2.0,34.9" fill="#d2d0ca" stroke="#c0beb8" stroke-width="0.8"/>
<polygon points="100.2,68.0 113.3,67.4 114.3,80.3 101.1,81.5" fill="#d2d0ca" stroke="#c0beb8" stroke-width="0.8"/>
<polygon points="49.0,130.2 79.0,128.0 80.3,152.2 50.5,154.1" fill="#d2d0ca" stroke="#c0beb8" stroke-width="0.8"/>
<polygon points="58.2,154.1 76.6,152.5 80.3,188.4 73.5,189.3 74.4,208.3 64.3,209.2 62.8,189.9" fill="#d2d0ca" stroke="#c0beb8" stroke-width="0.8"/>
<polygon points="98.6,144.0 225.1,132.3 224.5,130.2 243.5,128.6 246.9,160.5 235.2,162.3 234.0,155.6 103.5,170.3" fill="#d2d0ca" stroke="#c0beb8" stroke-width="0.8"/>
<polygon points="108.7,170.0 214.4,158.7 215.9,166.9 219.9,166.9 221.2,176.1 107.2,189.3 105.7,180.7 109.7,180.1" fill="#d2d0ca" stroke="#c0beb8" stroke-width="0.8"/>
<polygon points="60.6,209.8 238.3,190.5 240.5,208.3 242.0,227.0 61.3,227.0" fill="#d2d0ca" stroke="#c0beb8" stroke-width="0.8"/>
<polygon points="330.8,200.6 340.0,198.5 340.0,227.0 333.9,227.0" fill="#d2d0ca" stroke="#c0beb8" stroke-width="0.8"/>
<polygon points="387.5,74.4 416.6,62.8 421.8,74.4 411.1,79.0 414.4,88.2" fill="#d2d0ca" stroke="#c0beb8" stroke-width="0.8"/>
<polygon points="424.2,61.3 439.5,54.5 458.8,102.6 445.7,108.7" fill="#d2d0ca" stroke="#c0beb8" stroke-width="0.8"/>
<polygon points="467.1,0.0 487.0,0.0 498.7,30.6 481.5,38.3" fill="#d2d0ca" stroke="#c0beb8" stroke-width="0.8"/>
<polygon points="499.3,75.0 514.6,68.9 520.7,81.2 505.4,87.3" fill="#d2d0ca" stroke="#c0beb8" stroke-width="0.8"/>
<polygon points="529.3,81.2 543.7,74.4 549.8,87.3 536.0,93.4" fill="#d2d0ca" stroke="#c0beb8" stroke-width="0.8"/>
<polygon points="531.4,99.5 552.9,90.4 559.9,105.7 538.5,117.0" fill="#d2d0ca" stroke="#c0beb8" stroke-width="0.8"/>
<polygon points="491.6,117.9 508.5,109.7 516.1,125.6 499.3,133.2" fill="#d2d0ca" stroke="#c0beb8" stroke-width="0.8"/>
<polygon points="573.4,55.1 585.0,49.6 619.4,128.6 609.6,134.8" fill="#d2d0ca" stroke="#c0beb8" stroke-width="0.8"/>
<polygon points="587.5,49.0 626.4,30.6 629.5,36.1 611.1,45.3 614.1,55.7 604.0,60.3 608.9,73.5 600.4,78.1" fill="#d2d0ca" stroke="#c0beb8" stroke-width="0.8"/>
<polygon points="633.4,75.0 661.6,67.4 664.7,80.3 659.2,82.7 663.2,98.0 652.4,102.6 647.8,87.3 636.5,89.4" fill="#d2d0ca" stroke="#c0beb8" stroke-width="0.8"/>
<polygon points="514.6,171.5 529.9,166.9 536.0,183.8 520.7,189.9" fill="#d2d0ca" stroke="#c0beb8" stroke-width="0.8"/>
<polygon points="623.3,203.7 646.3,196.0 649.4,227.0 627.9,227.0" fill="#d2d0ca" stroke="#c0beb8" stroke-width="0.8"/>
<polygon points="62.8,227.0 189.9,227.0 189.9,230.7 134.8,242.3 134.8,276.0 113.3,277.5 105.7,291.3 109.7,300.5 104.1,312.8 88.8,313.4 83.3,302.0 85.2,318.9 72.6,325.0" fill="#d2d0ca" stroke="#c0beb8" stroke-width="0.8"/>
<polygon points="9.2,301.1 20.8,300.5 20.8,295.9 29.7,295.9 30.6,410.8 38.3,410.8 38.9,423.0 13.8,438.4 8.6,423.0 12.3,423.0 11.6,349.5 5.5,349.5 5.5,346.5 9.2,346.5" fill="#d2d0ca" stroke="#c0beb8" stroke-width="0.8"/>
<polygon points="4.6,438.4 50.5,404.0 134.8,355.6 140.9,364.2 137.8,367.3 147.6,378.6 102.6,406.2 104.1,416.3 87.3,425.5 82.1,419.4 12.3,454.0 4.6,454.0" fill="#d2d0ca" stroke="#c0beb8" stroke-width="0.8"/>
<polygon points="136.3,259.2 140.9,248.4 148.6,249.1 146.4,260.7 140.9,272.9 134.8,263.8" fill="#d2d0ca" stroke="#c0beb8" stroke-width="0.8"/>
<polygon points="146.4,269.9 162.3,262.2 175.5,289.8 159.9,299.0" fill="#d2d0ca" stroke="#c0beb8" stroke-width="0.8"/>
<polygon points="180.1,248.4 197.6,242.3 208.3,288.3 194.5,293.8" fill="#d2d0ca" stroke="#c0beb8" stroke-width="0.8"/>
<polygon points="232.8,305.1 252.7,295.9 259.7,311.2 242.0,320.4" fill="#d2d0ca" stroke="#c0beb8" stroke-width="0.8"/>
<polygon points="257.3,285.2 300.2,266.8 309.4,282.1 269.6,306.6" fill="#d2d0ca" stroke="#c0beb8" stroke-width="0.8"/>
<polygon points="300.2,335.7 317.0,328.1 323.2,341.9 307.8,350.1" fill="#d2d0ca" stroke="#c0beb8" stroke-width="0.8"/>
<polygon points="324.7,342.8 332.3,341.9 336.3,371.0 329.3,372.5" fill="#d2d0ca" stroke="#c0beb8" stroke-width="0.8"/>
<polygon points="307.2,377.1 324.7,374.0 326.8,381.7 308.8,384.7" fill="#d2d0ca" stroke="#c0beb8" stroke-width="0.8"/>
<polygon points="294.1,390.9 336.9,384.7 340.0,401.6 297.1,406.2" fill="#d2d0ca" stroke="#c0beb8" stroke-width="0.8"/>
<polygon points="185.3,403.1 242.0,397.9 243.5,393.9 277.2,391.8 280.3,416.9 294.1,417.5 295.6,423.0 307.8,423.0 309.4,454.0 251.2,454.0 249.6,438.4 188.4,438.4" fill="#d2d0ca" stroke="#c0beb8" stroke-width="0.8"/>
<polygon points="317.0,420.0 340.0,418.4 340.0,454.0 318.6,454.0" fill="#d2d0ca" stroke="#c0beb8" stroke-width="0.8"/>
<polygon points="125.6,442.9 157.7,426.1 161.7,433.8 134.8,454.0 125.6,454.0" fill="#d2d0ca" stroke="#c0beb8" stroke-width="0.8"/>
<polygon points="183.8,444.5 202.8,442.9 203.7,454.0 184.7,454.0" fill="#d2d0ca" stroke="#c0beb8" stroke-width="0.8"/>
<polygon points="356.8,237.7 392.1,227.0 401.3,240.8 367.6,255.2" fill="#d2d0ca" stroke="#c0beb8" stroke-width="0.8"/>
<polygon points="477.8,253.0 496.2,246.9 502.3,265.3 484.6,272.3" fill="#d2d0ca" stroke="#c0beb8" stroke-width="0.8"/>
<polygon points="503.9,240.8 523.8,234.7 536.0,251.5 525.3,256.1 529.9,266.8 517.7,270.5" fill="#d2d0ca" stroke="#c0beb8" stroke-width="0.8"/>
<polygon points="459.5,291.9 482.4,287.6 482.4,283.7 491.6,282.7 493.8,295.9 461.9,302.0" fill="#d2d0ca" stroke="#c0beb8" stroke-width="0.8"/>
<polygon points="357.8,305.1 385.9,300.5 395.1,343.4 390.5,344.9 387.5,325.0 361.4,328.1" fill="#d2d0ca" stroke="#c0beb8" stroke-width="0.8"/>
<polygon points="344.6,334.2 358.4,332.7 359.9,352.0 346.1,353.2" fill="#d2d0ca" stroke="#c0beb8" stroke-width="0.8"/>
<polygon points="471.1,310.3 479.4,309.1 482.4,331.1 474.2,332.7" fill="#d2d0ca" stroke="#c0beb8" stroke-width="0.8"/>
<polygon points="481.5,309.7 488.6,308.8 491.6,328.1 484.0,329.0" fill="#d2d0ca" stroke="#c0beb8" stroke-width="0.8"/>
<polygon points="491.6,315.8 510.0,313.4 514.6,348.0 497.7,351.1" fill="#d2d0ca" stroke="#c0beb8" stroke-width="0.8"/>
<polygon points="514.6,289.8 531.4,286.7 539.1,322.0 539.1,331.1 527.5,332.7 526.2,322.6 520.7,322.6" fill="#d2d0ca" stroke="#c0beb8" stroke-width="0.8"/>
<polygon points="526.8,335.7 539.1,333.6 543.7,355.6 532.4,358.1" fill="#d2d0ca" stroke="#c0beb8" stroke-width="0.8"/>
<polygon points="549.2,355.0 562.1,352.6 565.1,369.4 552.0,371.6" fill="#d2d0ca" stroke="#c0beb8" stroke-width="0.8"/>
<polygon points="509.1,363.3 521.3,361.8 527.5,392.4 536.0,380.2 539.7,407.7 528.4,410.2 516.1,398.5" fill="#d2d0ca" stroke="#c0beb8" stroke-width="0.8"/>
<polygon points="553.5,383.8 567.3,381.7 570.3,399.1 555.9,401.6" fill="#d2d0ca" stroke="#c0beb8" stroke-width="0.8"/>
<polygon points="581.1,359.3 599.7,357.2 607.1,406.2 588.7,409.3" fill="#d2d0ca" stroke="#c0beb8" stroke-width="0.8"/>
<polygon points="361.4,387.8 376.8,384.7 389.0,454.0 369.1,454.0" fill="#d2d0ca" stroke="#c0beb8" stroke-width="0.8"/>
<polygon points="347.7,417.5 359.0,415.4 360.8,426.7 349.2,428.5" fill="#d2d0ca" stroke="#c0beb8" stroke-width="0.8"/>
<polygon points="555.9,421.5 572.8,418.4 575.9,436.8 559.0,439.9" fill="#d2d0ca" stroke="#c0beb8" stroke-width="0.8"/>
<polygon points="601.9,427.6 623.3,424.6 627.9,454.0 606.5,454.0" fill="#d2d0ca" stroke="#c0beb8" stroke-width="0.8"/>
<polygon points="523.8,438.4 542.2,433.8 548.3,454.0 526.8,454.0" fill="#d2d0ca" stroke="#c0beb8" stroke-width="0.8"/>
<polygon points="559.0,449.1 577.4,446.0 578.9,454.0 560.5,454.0" fill="#d2d0ca" stroke="#c0beb8" stroke-width="0.8"/>
<polygon points="611.1,239.3 644.8,228.5 647.8,250.0 620.3,260.1" fill="#d2d0ca" stroke="#c0beb8" stroke-width="0.8"/>
<polygon points="637.1,268.4 647.8,265.3 647.8,300.5 641.7,303.6" fill="#d2d0ca" stroke="#c0beb8" stroke-width="0.8"/>
<polygon points="551.4,276.0 566.7,272.9 572.8,303.6 559.0,306.6" fill="#d2d0ca" stroke="#c0beb8" stroke-width="0.8"/>
<polygon points="340.0,227.0 349.2,227.0 350.7,242.3 340.0,245.4" fill="#d2d0ca" stroke="#c0beb8" stroke-width="0.8"/>
<polygon points="10.7,454.0 26.0,454.0 13.8,460.7" fill="#d2d0ca" stroke="#c0beb8" stroke-width="0.8"/>
<polygon points="125.6,454.0 137.8,454.0 138.5,469.3 150.1,469.3 150.7,484.6 126.2,485.5" fill="#d2d0ca" stroke="#c0beb8" stroke-width="0.8"/>
<polygon points="183.8,454.0 202.2,454.0 207.7,477.0 189.9,481.0" fill="#d2d0ca" stroke="#c0beb8" stroke-width="0.8"/>
<polygon points="252.7,454.0 306.3,454.0 307.8,466.3 255.8,471.8" fill="#d2d0ca" stroke="#c0beb8" stroke-width="0.8"/>
<polygon points="320.1,454.0 340.0,454.0 340.0,463.2 321.6,465.6" fill="#d2d0ca" stroke="#c0beb8" stroke-width="0.8"/>
<polygon points="69.8,481.6 80.3,480.0 82.7,495.4 91.3,495.4 91.9,507.6 95.6,509.1 98.6,536.1 84.2,537.3 82.1,518.3 75.0,516.8" fill="#d2d0ca" stroke="#c0beb8" stroke-width="0.8"/>
<polygon points="7.7,515.3 41.4,513.7 42.3,518.3 49.0,518.3 50.5,555.1 21.4,556.6 21.4,565.8 0.0,567.3 0.0,529.0 7.7,527.5" fill="#d2d0ca" stroke="#c0beb8" stroke-width="0.8"/>
<polygon points="94.3,554.5 113.9,552.6 116.4,579.0 126.2,578.1 128.0,599.5 117.9,601.0 118.8,623.1 107.2,624.9 105.7,611.7 99.5,611.7" fill="#d2d0ca" stroke="#c0beb8" stroke-width="0.8"/>
<polygon points="42.3,579.0 62.8,578.1 63.4,585.7 72.6,585.7 73.5,633.2 42.9,643.9 31.5,643.9 31.5,628.6 45.9,625.5 45.9,601.0 36.8,601.0 36.8,585.7 42.3,585.7" fill="#d2d0ca" stroke="#c0beb8" stroke-width="0.8"/>
<polygon points="159.3,495.4 284.9,484.0 291.0,541.3 254.8,544.4 262.8,605.6 226.7,611.7 227.3,619.4 189.9,623.1 189.3,616.3 167.9,618.8 162.3,552.0 154.7,552.6 153.2,539.8 161.7,538.2" fill="#d2d0ca" stroke="#c0beb8" stroke-width="0.8"/>
<polygon points="287.3,495.4 302.6,493.8 303.9,503.0 288.5,504.5" fill="#d2d0ca" stroke="#c0beb8" stroke-width="0.8"/>
<polygon points="291.0,515.3 298.6,512.2 303.9,518.3 301.7,526.0 294.1,527.5" fill="#d2d0ca" stroke="#c0beb8" stroke-width="0.8"/>
<polygon points="292.5,527.5 301.7,526.0 304.8,533.6 298.6,538.2 292.5,535.2" fill="#d2d0ca" stroke="#c0beb8" stroke-width="0.8"/>
<polygon points="306.3,526.0 314.0,522.9 318.6,529.0 315.5,536.1 307.8,535.2" fill="#d2d0ca" stroke="#c0beb8" stroke-width="0.8"/>
<polygon points="108.7,662.3 150.1,656.8 150.7,681.0 110.3,681.0" fill="#d2d0ca" stroke="#c0beb8" stroke-width="0.8"/>
<polygon points="156.2,655.5 199.1,652.5 200.6,668.4 157.7,671.5" fill="#d2d0ca" stroke="#c0beb8" stroke-width="0.8"/>
<polygon points="205.2,651.6 219.0,650.0 219.0,647.0 280.3,643.9 281.8,662.3 223.6,669.9 208.3,671.5" fill="#d2d0ca" stroke="#c0beb8" stroke-width="0.8"/>
<polygon points="309.4,642.4 323.2,640.8 326.2,681.0 312.4,681.0" fill="#d2d0ca" stroke="#c0beb8" stroke-width="0.8"/>
<polygon points="0.0,634.7 23.0,634.7 24.5,645.4 0.0,650.0" fill="#d2d0ca" stroke="#c0beb8" stroke-width="0.8"/>
<polygon points="0.0,665.4 39.8,660.8 41.4,681.0 0.0,681.0" fill="#d2d0ca" stroke="#c0beb8" stroke-width="0.8"/>
<polygon points="45.9,665.4 104.1,659.8 105.7,681.0 47.5,681.0" fill="#d2d0ca" stroke="#c0beb8" stroke-width="0.8"/>
<polygon points="369.1,454.0 385.9,454.0 390.5,490.8 373.7,493.8" fill="#d2d0ca" stroke="#c0beb8" stroke-width="0.8"/>
<polygon points="517.7,472.4 536.0,469.3 541.5,495.4 523.2,499.9" fill="#d2d0ca" stroke="#c0beb8" stroke-width="0.8"/>
<polygon points="560.5,454.0 577.4,454.0 582.0,464.7 563.6,466.9" fill="#d2d0ca" stroke="#c0beb8" stroke-width="0.8"/>
<polygon points="565.1,477.0 583.5,473.9 587.5,491.4 568.2,494.4" fill="#d2d0ca" stroke="#c0beb8" stroke-width="0.8"/>
<polygon points="571.3,503.0 588.1,500.6 590.6,519.9 574.3,522.0" fill="#d2d0ca" stroke="#c0beb8" stroke-width="0.8"/>
<polygon points="532.4,516.8 547.7,514.3 550.4,527.5 534.5,530.0" fill="#d2d0ca" stroke="#c0beb8" stroke-width="0.8"/>
<polygon points="531.4,533.0 545.2,531.2 549.8,547.4 554.4,546.8 557.5,564.3 539.1,566.7" fill="#d2d0ca" stroke="#c0beb8" stroke-width="0.8"/>
<polygon points="576.5,542.8 594.8,540.4 600.4,571.9 582.0,575.0" fill="#d2d0ca" stroke="#c0beb8" stroke-width="0.8"/>
<polygon points="608.0,454.0 624.9,454.0 635.6,516.8 618.7,520.8" fill="#d2d0ca" stroke="#c0beb8" stroke-width="0.8"/>
<polygon points="620.3,535.2 638.6,533.0 642.6,564.3 624.9,566.7" fill="#d2d0ca" stroke="#c0beb8" stroke-width="0.8"/>
<polygon points="587.5,588.8 626.4,586.3 629.5,578.1 644.8,576.5 646.3,591.8 638.6,601.0 589.6,602.6" fill="#d2d0ca" stroke="#c0beb8" stroke-width="0.8"/>
<polygon points="362.1,534.3 393.6,532.1 394.5,542.8 402.8,542.2 404.9,561.2 364.5,564.3" fill="#d2d0ca" stroke="#c0beb8" stroke-width="0.8"/>
<polygon points="485.5,644.5 551.4,643.9 552.0,663.8 499.3,663.8 499.3,681.0 467.1,681.0 467.1,665.4 485.5,664.7" fill="#d2d0ca" stroke="#c0beb8" stroke-width="0.8"/>
<polygon points="560.5,642.4 646.3,641.5 646.3,659.2 560.5,659.2" fill="#d2d0ca" stroke="#c0beb8" stroke-width="0.8"/>
<polygon points="364.5,640.8 390.5,639.3 392.1,656.2 379.8,657.7 381.4,681.0 366.0,681.0" fill="#d2d0ca" stroke="#c0beb8" stroke-width="0.8"/>
<polygon points="412.0,643.9 430.4,642.4 435.0,681.0 415.0,681.0" fill="#d2d0ca" stroke="#c0beb8" stroke-width="0.8"/>
<polygon points="555.9,664.7 565.1,664.7 565.1,681.0 555.9,681.0" fill="#d2d0ca" stroke="#c0beb8" stroke-width="0.8"/>
<polygon points="340.0,454.0 349.2,454.0 352.3,472.4 340.0,473.9" fill="#d2d0ca" stroke="#c0beb8" stroke-width="0.8"/>
<polygon points="298.8,170.5 316.6,161.3 326.8,173.7 308.5,186.7" fill="#d2d0ca" stroke="#c0beb8" stroke-width="0.8"/>
<polygon points="343.3,150.2 360.3,139.2 370.5,154.3 346.2,168.1" fill="#d2d0ca" stroke="#c0beb8" stroke-width="0.8"/>
<polygon points="370.4,147.5 379.4,133.2 394.3,141.3 381.7,167.3 368.9,163.2 376.5,151.1" fill="#d2d0ca" stroke="#c0beb8" stroke-width="0.8"/>
<polygon points="390.3,160.0 400.8,142.1 409.7,146.2 413.8,143.8 422.7,159.2 414.6,172.1" fill="#d2d0ca" stroke="#c0beb8" stroke-width="0.8"/>
<polygon points="417.8,167.3 422.7,160.0 435.7,162.4 434.8,169.7 427.6,171.3" fill="#d2d0ca" stroke="#c0beb8" stroke-width="0.8"/>
<polygon points="429.2,171.3 440.5,168.9 442.9,173.7 454.3,180.2 456.7,185.9 433.2,191.6" fill="#d2d0ca" stroke="#c0beb8" stroke-width="0.8"/>
<polygon points="372.5,181.8 404.9,175.4 406.8,183.5 374.9,189.1" fill="#d2d0ca" stroke="#c0beb8" stroke-width="0.8"/>
<polygon points="354.3,191.2 373.3,187.5 374.9,189.1 390.3,187.5 392.7,204.5 391.1,211.0 370.0,220.4 364.4,211.0 366.0,207.8 357.1,208.6" fill="#d2d0ca" stroke="#c0beb8" stroke-width="0.8"/>
<polygon points="407.6,203.7 418.2,201.3 420.8,215.9 413.0,219.4" fill="#d2d0ca" stroke="#c0beb8" stroke-width="0.8"/>
<polygon points="331.2,198.8 341.4,198.0 347.9,245.8 338.5,247.4" fill="#d2d0ca" stroke="#c0beb8" stroke-width="0.8"/>
<polygon points="357.1,236.1 391.9,220.7 401.6,241.0 383.8,250.0 361.1,250.0" fill="#d2d0ca" stroke="#c0beb8" stroke-width="0.8"/>
<polygon points="465.6,178.6 476.2,183.5 495.6,181.8 500.5,198.0 479.4,207.8 469.7,208.6" fill="#d2d0ca" stroke="#c0beb8" stroke-width="0.8"/>
<polygon points="477.0,159.2 485.9,162.4 487.5,172.1 478.6,169.7" fill="#d2d0ca" stroke="#c0beb8" stroke-width="0.8"/>
<path d="M446.6,45.9 526.2,8.6 552.0,61.3 472.3,98.6 Z M456.4,49.0 522.3,19.0 542.2,58.2 476.3,88.8 Z" fill-rule="evenodd" fill="#d2d0ca" stroke="#c0beb8" stroke-width="0.8"/>
<circle cx="116.4" cy="256.1" r="19.0" fill="#eeebe4"/>
<path d="M191.4,492.3 L195.1,550.5" stroke="#c2c0ba" stroke-width="0.7"/>
<path d="M228.2,489.2 L232.8,545.9" stroke="#c2c0ba" stroke-width="0.7"/>
<path d="M248.1,487.1 L252.7,544.4" stroke="#c2c0ba" stroke-width="0.7"/>
<path d="M265.0,485.5 L269.6,542.8" stroke="#c2c0ba" stroke-width="0.7"/>
<path d="M162.3,552.0 L255.8,544.4" stroke="#c2c0ba" stroke-width="0.7"/>
<path d="M251.2,526.0 L268.0,523.8" stroke="#c2c0ba" stroke-width="0.7"/>
<path d="M-5,129.5 L131,115 L262,100.5 L268,100" fill="none" stroke="#dedcd5" stroke-width="11" stroke-linejoin="round" stroke-linecap="butt"/>
<path d="M340,287 L302,227 L284,190 L270,150 L266.5,100 L266,60 L267,40 Q267.5,30.5 276,33.5 L340,66 L462,135 L484,159 L507,203" fill="none" stroke="#dedcd5" stroke-width="11" stroke-linejoin="round" stroke-linecap="butt"/>
<path d="M533,196 L552.5,200 L594,303 L625,386 L642,454 L665,607 L668,626" fill="none" stroke="#dedcd5" stroke-width="9.5" stroke-linejoin="round" stroke-linecap="butt"/>
<path d="M560,196 L576.6,209 L626,319 L646,392 L662,454 L682,580" fill="none" stroke="#dedcd5" stroke-width="9.5" stroke-linejoin="round" stroke-linecap="butt"/>
<path d="M626,319 L685,308" fill="none" stroke="#dedcd5" stroke-width="9" stroke-linejoin="round" stroke-linecap="butt"/>
<path d="M549.5,461 L582,613 L584,622" fill="none" stroke="#dedcd5" stroke-width="9.5" stroke-linejoin="round" stroke-linecap="butt"/>
<path d="M-5,659.2 L160,642.7 L330,624.6 L485,623.2 L664,618.7 L690,618" fill="none" stroke="#dedcd5" stroke-width="11.2" stroke-linejoin="round" stroke-linecap="butt"/>
<path d="M361.5,626 L351,690" fill="none" stroke="#dedcd5" stroke-width="9" stroke-linejoin="round" stroke-linecap="butt"/>
<path d="M444.5,622 L445.5,690" fill="none" stroke="#dedcd5" stroke-width="9.5" stroke-linejoin="round" stroke-linecap="butt"/>
<path d="M672,617 L678,690" fill="none" stroke="#dedcd5" stroke-width="9" stroke-linejoin="round" stroke-linecap="butt"/>
<path d="M348.6,622 L331.5,690" fill="none" stroke="#dedcd5" stroke-width="9.5" stroke-linejoin="round" stroke-linecap="butt"/>
<path d="M-5,129.5 L131,115 L262,100.5 L268,100" fill="none" stroke="#fff" stroke-width="9" stroke-linejoin="round" stroke-linecap="butt"/>
<path d="M340,287 L302,227 L284,190 L270,150 L266.5,100 L266,60 L267,40 Q267.5,30.5 276,33.5 L340,66 L462,135 L484,159 L507,203" fill="none" stroke="#fff" stroke-width="9" stroke-linejoin="round" stroke-linecap="butt"/>
<path d="M533,196 L552.5,200 L594,303 L625,386 L642,454 L665,607 L668,626" fill="none" stroke="#fff" stroke-width="7.5" stroke-linejoin="round" stroke-linecap="butt"/>
<path d="M560,196 L576.6,209 L626,319 L646,392 L662,454 L682,580" fill="none" stroke="#fff" stroke-width="7.5" stroke-linejoin="round" stroke-linecap="butt"/>
<path d="M626,319 L685,308" fill="none" stroke="#fff" stroke-width="7" stroke-linejoin="round" stroke-linecap="butt"/>
<path d="M549.5,461 L582,613 L584,622" fill="none" stroke="#fff" stroke-width="7.5" stroke-linejoin="round" stroke-linecap="butt"/>
<path d="M-5,659.2 L160,642.7 L330,624.6 L485,623.2 L664,618.7 L690,618" fill="none" stroke="#fff" stroke-width="9.2" stroke-linejoin="round" stroke-linecap="butt"/>
<path d="M361.5,626 L351,690" fill="none" stroke="#fff" stroke-width="7" stroke-linejoin="round" stroke-linecap="butt"/>
<path d="M444.5,622 L445.5,690" fill="none" stroke="#fff" stroke-width="7.5" stroke-linejoin="round" stroke-linecap="butt"/>
<path d="M672,617 L678,690" fill="none" stroke="#fff" stroke-width="7" stroke-linejoin="round" stroke-linecap="butt"/>
<path d="M348.6,622 L331.5,690" fill="none" stroke="#fff" stroke-width="7.5" stroke-linejoin="round" stroke-linecap="butt"/>
<path d="M-10,495.8 L425,245 L441,237" fill="none" stroke="#e2dcae" stroke-width="14.5" stroke-linejoin="round" stroke-linecap="butt"/>
<path d="M425,245 L435.4,238.3 L465.8,223.5 L506.3,208 L546.8,193 L587.3,176.2 L627.8,160.4 L680,143.6 L690,140.4" fill="none" stroke="#e2dcae" stroke-width="13.8" stroke-linejoin="round" stroke-linecap="butt"/>
<path d="M425,246 L448,243.6 L472,239.6 L526.5,219.6 L567,201.8 L595,191.6 L628,179.8 L690,158.6" fill="none" stroke="#e2dcae" stroke-width="13.5" stroke-linejoin="round" stroke-linecap="butt"/>
<path d="M-10,495.8 L425,245 L441,237" fill="none" stroke="#f7f1ab" stroke-width="12.5" stroke-linejoin="round" stroke-linecap="butt"/>
<path d="M425,245 L435.4,238.3 L465.8,223.5 L506.3,208 L546.8,193 L587.3,176.2 L627.8,160.4 L680,143.6 L690,140.4" fill="none" stroke="#f7f1ab" stroke-width="11.8" stroke-linejoin="round" stroke-linecap="butt"/>
<path d="M425,246 L448,243.6 L472,239.6 L526.5,219.6 L567,201.8 L595,191.6 L628,179.8 L690,158.6" fill="none" stroke="#f7f1ab" stroke-width="11.5" stroke-linejoin="round" stroke-linecap="butt"/>
<g><rect x="576.5" y="628.5" width="101" height="24.5" rx="4" fill="#5a5a58" fill-opacity="0.55"/>
<rect x="579" y="631" width="96" height="19.5" rx="3" fill="#6a6a68" fill-opacity="0.35"/>
<circle cx="589.3" cy="640.6" r="6.8" fill="url(#gNav)" fill-opacity="0.9" stroke="#a4a4a2" stroke-width="0.7"/><path d="M586.8,639.6 L591.8,639.6 L589.3,644.2 Z" fill="#ececec"/>
</g>
<path transform="translate(619.5 162.5) rotate(-18) scale(1.15)" d="M-7,0 L-2.5,-3.2 L-2.5,-1 L1,-1.4 L2,-0.6 L4,-1.5 L6.5,-0.8 L7,0 L6.5,0.8 L4,1.5 L2,0.6 L1,1.4 L-2.5,1 L-2.5,3.2 Z" fill="#c2c0b4"/>
<path transform="translate(453 228.5) rotate(-18) scale(1.15)" d="M-7,0 L-2.5,-3.2 L-2.5,-1 L1,-1.4 L2,-0.6 L4,-1.5 L6.5,-0.8 L7,0 L6.5,0.8 L4,1.5 L2,0.6 L1,1.4 L-2.5,1 L-2.5,3.2 Z" fill="#c2c0b4"/>
<path transform="translate(648 172) rotate(162) scale(1.15)" d="M-7,0 L-2.5,-3.2 L-2.5,-1 L1,-1.4 L2,-0.6 L4,-1.5 L6.5,-0.8 L7,0 L6.5,0.8 L4,1.5 L2,0.6 L1,1.4 L-2.5,1 L-2.5,3.2 Z" fill="#c2c0b4"/>
<path transform="translate(498 229.5) rotate(162) scale(1.15)" d="M-7,0 L-2.5,-3.2 L-2.5,-1 L1,-1.4 L2,-0.6 L4,-1.5 L6.5,-0.8 L7,0 L6.5,0.8 L4,1.5 L2,0.6 L1,1.4 L-2.5,1 L-2.5,3.2 Z" fill="#c2c0b4"/>
<path transform="translate(585 222) rotate(68) scale(1.15)" d="M-7,0 L-2.5,-3.2 L-2.5,-1 L1,-1.4 L2,-0.6 L4,-1.5 L6.5,-0.8 L7,0 L6.5,0.8 L4,1.5 L2,0.6 L1,1.4 L-2.5,1 L-2.5,3.2 Z" fill="#c2c0b4"/>
<path transform="translate(592.5 243) rotate(68) scale(1.15)" d="M-7,0 L-2.5,-3.2 L-2.5,-1 L1,-1.4 L2,-0.6 L4,-1.5 L6.5,-0.8 L7,0 L6.5,0.8 L4,1.5 L2,0.6 L1,1.4 L-2.5,1 L-2.5,3.2 Z" fill="#c2c0b4"/>
<path transform="translate(627.9 329) rotate(75) scale(1.15)" d="M-7,0 L-2.5,-3.2 L-2.5,-1 L1,-1.4 L2,-0.6 L4,-1.5 L6.5,-0.8 L7,0 L6.5,0.8 L4,1.5 L2,0.6 L1,1.4 L-2.5,1 L-2.5,3.2 Z" fill="#c2c0b4"/>
<path transform="translate(595.8 305) rotate(70) scale(1.15)" d="M-7,0 L-2.5,-3.2 L-2.5,-1 L1,-1.4 L2,-0.6 L4,-1.5 L6.5,-0.8 L7,0 L6.5,0.8 L4,1.5 L2,0.6 L1,1.4 L-2.5,1 L-2.5,3.2 Z" fill="#c2c0b4"/>
<path transform="translate(645 398) rotate(78) scale(1.15)" d="M-7,0 L-2.5,-3.2 L-2.5,-1 L1,-1.4 L2,-0.6 L4,-1.5 L6.5,-0.8 L7,0 L6.5,0.8 L4,1.5 L2,0.6 L1,1.4 L-2.5,1 L-2.5,3.2 Z" fill="#c2c0b4"/>
<path transform="translate(639 445) rotate(80) scale(1.15)" d="M-7,0 L-2.5,-3.2 L-2.5,-1 L1,-1.4 L2,-0.6 L4,-1.5 L6.5,-0.8 L7,0 L6.5,0.8 L4,1.5 L2,0.6 L1,1.4 L-2.5,1 L-2.5,3.2 Z" fill="#c2c0b4"/>
<path transform="translate(658 472) rotate(82) scale(1.15)" d="M-7,0 L-2.5,-3.2 L-2.5,-1 L1,-1.4 L2,-0.6 L4,-1.5 L6.5,-0.8 L7,0 L6.5,0.8 L4,1.5 L2,0.6 L1,1.4 L-2.5,1 L-2.5,3.2 Z" fill="#c2c0b4"/>
<path transform="translate(673 506) rotate(84) scale(1.15)" d="M-7,0 L-2.5,-3.2 L-2.5,-1 L1,-1.4 L2,-0.6 L4,-1.5 L6.5,-0.8 L7,0 L6.5,0.8 L4,1.5 L2,0.6 L1,1.4 L-2.5,1 L-2.5,3.2 Z" fill="#c2c0b4"/>
<path transform="translate(358 638) rotate(100) scale(1.15)" d="M-7,0 L-2.5,-3.2 L-2.5,-1 L1,-1.4 L2,-0.6 L4,-1.5 L6.5,-0.8 L7,0 L6.5,0.8 L4,1.5 L2,0.6 L1,1.4 L-2.5,1 L-2.5,3.2 Z" fill="#c2c0b4"/>
<text x="291" y="63.3" font-size="10" fill="#0000ff" text-anchor="middle">1</text>
<text x="587" y="166.3" font-size="10" fill="#0000ff" text-anchor="middle">35</text>
<text x="625" y="202.3" font-size="10" fill="#0000ff" text-anchor="middle">38</text>
<text x="673" y="202.3" font-size="10" fill="#0000ff" text-anchor="middle">44</text>
<text x="537" y="237.3" font-size="10" fill="#0000ff" text-anchor="middle">36</text>
<text x="336" y="262.3" font-size="10" fill="#0000ff" text-anchor="middle">2</text>
<text x="314" y="277.3" font-size="10" fill="#0000ff" text-anchor="middle">7</text>
<text x="302" y="303.3" font-size="10" fill="#0000ff" text-anchor="middle">15</text>
<text x="248" y="334.3" font-size="10" fill="#0000ff" text-anchor="middle">13</text>
<text x="226" y="379.3" font-size="10" fill="#0000ff" text-anchor="middle">20</text>
<text x="578" y="307.3" font-size="10" fill="#0000ff" text-anchor="middle">12</text>
<text x="659" y="329.3" font-size="10" fill="#0000ff" text-anchor="middle">2</text>
<text x="619" y="431.3" font-size="10" fill="#0000ff" text-anchor="middle">18</text>
<text x="675" y="395.3" font-size="10" fill="#0000ff" text-anchor="middle">2</text>
<text x="544" y="507.3" font-size="10" fill="#0000ff" text-anchor="middle">11</text>
<text x="569" y="501.3" font-size="10" fill="#0000ff" text-anchor="middle">22</text>
<text x="633" y="501.3" font-size="10" fill="#0000ff" text-anchor="middle">22</text>
<text x="581" y="564.3" font-size="10" fill="#0000ff" text-anchor="middle">20</text>
<text x="561" y="596.3" font-size="10" fill="#0000ff" text-anchor="middle">7</text>
<text x="588" y="590.3" font-size="10" fill="#0000ff" text-anchor="middle">4</text>
<text x="648" y="590.3" font-size="10" fill="#0000ff" text-anchor="middle">28</text>
<text x="604" y="611.3" font-size="10" fill="#0000ff" text-anchor="middle">45</text>
<text x="394" y="615.3" font-size="10" fill="#0000ff" text-anchor="middle">33</text>
<text x="474" y="615.3" font-size="10" fill="#0000ff" text-anchor="middle">43</text>
<text x="474" y="641.3" font-size="10" fill="#0000ff" text-anchor="middle">46</text>
<text x="548" y="638.3" font-size="10" fill="#0000ff" text-anchor="middle">50</text>
<text x="605" y="637.3" font-size="10" fill="#0000ff" text-anchor="middle">52</text>
<text x="650" y="641.3" font-size="10" fill="#0000ff" text-anchor="middle">58</text>
<text x="658" y="654.3" font-size="10" fill="#0000ff" text-anchor="middle">38</text>
<text x="320.5" y="645.0999999999999" font-size="10" fill="#0000ff" text-anchor="middle">40</text>
<text x="328.3" y="655.3" font-size="10" fill="#0000ff" text-anchor="middle">2</text>
<text x="368.7" y="661.3" font-size="10" fill="#0000ff" text-anchor="middle">1</text>
<text x="458" y="659.3" font-size="10" fill="#0000ff" text-anchor="middle">1</text>
<text x="10.1" y="650.9" font-size="10" fill="#0000ff" text-anchor="middle">15</text>
<text transform="translate(55.5 125) rotate(-6)" y="3.9" font-size="11" letter-spacing="0.35" text-anchor="middle" fill="#000" stroke="#fff" stroke-width="2.6" stroke-linejoin="round" paint-order="stroke">Fraunhoferstraße</text>
<text transform="translate(205 107.5) rotate(-7)" y="3.9" font-size="11" letter-spacing="0.35" text-anchor="middle" fill="#000" stroke="#fff" stroke-width="2.6" stroke-linejoin="round" paint-order="stroke">Fraunhoferstraße</text>
<text transform="translate(288.5 117) rotate(-28)" y="3.9" font-size="11" letter-spacing="0.65" text-anchor="middle" fill="#000" stroke="#fff" stroke-width="2.6" stroke-linejoin="round" paint-order="stroke">Stumpfstraße</text>
<text transform="translate(286 188) rotate(70)" y="3.9" font-size="11" letter-spacing="0.5" text-anchor="middle" fill="#000" stroke="#fff" stroke-width="2.6" stroke-linejoin="round" paint-order="stroke">Stumpfstraße</text>
<text transform="translate(378.5 90.6) rotate(27.2)" y="3.9" font-size="11" letter-spacing="0.32" text-anchor="middle" fill="#000" stroke="#fff" stroke-width="2.6" stroke-linejoin="round" paint-order="stroke">Emil-Frommel-Straße</text>
<text transform="translate(176 389.5) rotate(-29.5)" y="4.6" font-size="13" letter-spacing="0.5" text-anchor="middle" fill="#000" stroke="#fff" stroke-width="2.6" stroke-linejoin="round" paint-order="stroke">Haid-und-Neu-Straße</text>
<text transform="translate(335.5 296) rotate(-37)" y="4.6" font-size="13" letter-spacing="0.5" text-anchor="middle" fill="#000" stroke="#fff" stroke-width="2.6" stroke-linejoin="round" paint-order="stroke">Haid-und-Neu-Straße</text>
<text transform="translate(525 202) rotate(-17.3)" y="4.6" font-size="13" letter-spacing="0.45" text-anchor="middle" fill="#000" stroke="#fff" stroke-width="2.6" stroke-linejoin="round" paint-order="stroke">Haid-und-Neu-Straße</text>
<text transform="translate(533 222.5) rotate(-22)" y="4.6" font-size="13" letter-spacing="0.45" text-anchor="middle" fill="#000" stroke="#fff" stroke-width="2.6" stroke-linejoin="round" paint-order="stroke">Haid-und-Neu-Straße</text>
<text transform="translate(713.7 133.2) rotate(-17.5)" y="4.6" font-size="13" letter-spacing="0.5" text-anchor="middle" fill="#000" stroke="#fff" stroke-width="2.6" stroke-linejoin="round" paint-order="stroke">Haid-und-Neu-Straße</text>
<text transform="translate(718.8 152.2) rotate(-17.5)" y="4.6" font-size="13" letter-spacing="0.5" text-anchor="middle" fill="#000" stroke="#fff" stroke-width="2.6" stroke-linejoin="round" paint-order="stroke">Haid-und-Neu-Straße</text>
<text transform="translate(-13.8 499.4) rotate(-28.5)" y="4.6" font-size="13" letter-spacing="0.5" text-anchor="middle" fill="#000" stroke="#fff" stroke-width="2.6" stroke-linejoin="round" paint-order="stroke">Haid-und-Neu-Straße</text>
<text transform="translate(604 266) rotate(66)" y="3.9" font-size="11" letter-spacing="0.25" text-anchor="middle" fill="#000" stroke="#fff" stroke-width="2.6" stroke-linejoin="round" paint-order="stroke">Tullastraße</text>
<text transform="translate(636 360.3) rotate(72)" y="3.9" font-size="11" letter-spacing="0.25" text-anchor="middle" fill="#000" stroke="#fff" stroke-width="2.6" stroke-linejoin="round" paint-order="stroke">Tullastraße</text>
<text transform="translate(617 363) rotate(70.5)" y="3.9" font-size="11" letter-spacing="0.25" text-anchor="middle" fill="#000" stroke="#fff" stroke-width="2.6" stroke-linejoin="round" paint-order="stroke">Tullastraße</text>
<text transform="translate(560 502) rotate(75)" y="3.9" font-size="11" letter-spacing="0.45" text-anchor="middle" fill="#000" stroke="#fff" stroke-width="2.6" stroke-linejoin="round" paint-order="stroke">Durmstraße</text>
<text transform="translate(656 542) rotate(80)" y="3.9" font-size="11" letter-spacing="0.45" text-anchor="middle" fill="#000" stroke="#fff" stroke-width="2.6" stroke-linejoin="round" paint-order="stroke">Tullastraße</text>
<text transform="translate(674 540) rotate(82)" y="3.9" font-size="11" letter-spacing="0.45" text-anchor="middle" fill="#000" stroke="#fff" stroke-width="2.6" stroke-linejoin="round" paint-order="stroke">Tullastraße</text>
<text transform="translate(678 644) rotate(85)" y="3.9" font-size="11" letter-spacing="0.45" text-anchor="middle" fill="#000" stroke="#fff" stroke-width="2.6" stroke-linejoin="round" paint-order="stroke">Tullastraße</text>
<text transform="translate(94 653) rotate(-5.5)" y="3.9" font-size="11" letter-spacing="0.3" text-anchor="middle" fill="#000" stroke="#fff" stroke-width="2.6" stroke-linejoin="round" paint-order="stroke">Rintheimer Straße</text>
<text transform="translate(246.4 637.6) rotate(-5.5)" y="3.9" font-size="11" letter-spacing="0.3" text-anchor="middle" fill="#000" stroke="#fff" stroke-width="2.6" stroke-linejoin="round" paint-order="stroke">Rintheimer Straße</text>
<text transform="translate(448.5 685) rotate(89)" y="3.9" font-size="11" letter-spacing="0.5" text-anchor="middle" fill="#000" stroke="#fff" stroke-width="2.6" stroke-linejoin="round" paint-order="stroke">Humboldtstraße</text>
<text transform="translate(346.5 679.5) rotate(-80)" y="3.9" font-size="11" letter-spacing="0.45" text-anchor="middle" fill="#000" stroke="#fff" stroke-width="2.6" stroke-linejoin="round" paint-order="stroke">Veilchenstraße</text>
<text x="411" y="344.5" font-size="10.5" font-weight="bold" letter-spacing="0.4" text-anchor="middle" fill="#a4a4a4" stroke="#fff" stroke-width="2.2" stroke-linejoin="round" paint-order="stroke">Karlsruhe</text>
<polygon points="295.4,310.9 309.5,306.8 323,310.9 309.5,315" fill="#0000e6"/>
<text x="603" y="642.6" font-size="10" font-weight="bold" fill="#ececec" fill-opacity="0.85" stroke="#ececec" stroke-opacity="0.35" stroke-width="0.5" letter-spacing="-0.1">Kartenebenen</text>
<use href="#pin" transform="translate(264.5 98.5) scale(1.04)"/>
<use href="#pin" transform="translate(503.9 204.6) scale(1.0)"/>
<use href="#pin" transform="translate(543.7 191.4) scale(0.79)"/>
<use href="#pin" transform="translate(309.5 312.7) scale(1.03)"/>
<use href="#pin" transform="translate(339.2 287.5) scale(1)"/>
<use href="#pin" transform="translate(623.3 320.4) scale(0.955)"/>
<use href="#pin" transform="translate(641.7 386.3) scale(0.955)"/>
<use href="#pin" transform="translate(549.8 461.7) scale(1.0)"/>
<use href="#pin" transform="translate(349.4 624.2) scale(1)"/>
<use href="#pin" transform="translate(443 623.7) scale(1)"/>
<g transform="translate(52.5 52.4)" opacity="0.93">
<circle r="40.6" fill="none" stroke="#9c9c9a" stroke-width="0.7"/>
<circle r="39.3" fill="#7b7b79" stroke="#dededc" stroke-width="1.9"/>
<path d="M0,0 L-27,-29 A39.5,39.5 0 0 1 27,-29 Z" fill="#727270"/>
<path d="M-27.5,-28 A39.3,39.3 0 0 1 27.5,-28 Z" fill="#9a9a96"/>
<path d="M-39,-1 A39,39 0 0 1 -27,-29 L0,0 Z M39,-1 A39,39 0 0 0 27,-29 L0,0 Z" fill="url(#gNav)"/>
<path d="M-27,29 L0,0 L27,29 A39.5,39.5 0 0 1 -27,29 Z" fill="url(#gNav)"/>
<circle r="17" fill="#747472"/>
<path d="M-11.5,0 A11.5,11.5 0 0 1 11.5,0 Z" fill="#90908c"/><path d="M-11.5,0 A11.5,11.5 0 0 0 11.5,0 Z" fill="#6e6e6c"/>
<circle r="3" fill="#d2d2d0"/>
<path d="M0,-32 L-5,-22.5 L5,-22.5 Z M0,32.5 L-5,23 L5,23 Z M-32.5,0 L-22.5,-5 L-22.5,5 Z M32.5,0 L22.5,-5 L22.5,5 Z" fill="#d2d2d0"/>
</g>
<g transform="translate(659 3)"><rect x="0.7" y="0.7" width="17" height="17" rx="2.5" fill="#d2dc84" stroke="#24304a" stroke-width="1.4"/>
<path d="M1.5,3 Q1.5,1.5 3,1.5 L6,1.5 L5.5,8 L1.5,11 Z" fill="#a8d8f4"/><rect x="7.5" y="7.5" width="10" height="10" fill="#dce090" stroke="#0a3468" stroke-width="1.3"/></g>
<g><rect x="649" y="193" width="25.5" height="295" rx="4" fill="#4e4e4c" fill-opacity="0.56"/>
<rect x="661.2" y="217" width="3" height="240" rx="1.5" fill="#2c2c2a" fill-opacity="0.45"/>
<ellipse cx="662.8" cy="250.5" rx="3.8" ry="7.5" fill="#a8a8a4" stroke="#c8c8c4" stroke-width="0.6"/>
<path d="M657.5,205 H665.5 M661.5,201 V209 M658,476 H665" stroke="#c4c4c0" stroke-width="1"/>
<path d="M657.5,225 V454" stroke="#c8c8c4" stroke-width="1.6" stroke-dasharray="1.4 10.8"/>
<path d="M655,468 A6.5,6.5 0 0 1 668,468 Z" fill="#8e8e8a" fill-opacity="0.8"/>
</g>
<g font-size="10.5" fill="#e6e6e6">
<rect x="4.5" y="662.5" width="107" height="13.5" rx="4" fill="#555553"/>
<rect x="8.6" y="665.1" width="69.8" height="6.8" fill="#000" stroke="#d8d8d8" stroke-width="0.7"/><rect x="22.8" y="665.5" width="13.8" height="6" fill="#4c4c4a"/><rect x="50.4" y="665.5" width="13.8" height="6" fill="#4c4c4a"/>
<text x="85.5" y="673.2" letter-spacing="-0.3">50 m</text>
<rect x="265" y="662.8" width="150.5" height="12.6" rx="4" fill="#555553"/>
<text x="340" y="673" text-anchor="middle" letter-spacing="-0.1">49° 00′ 53″ N, 008° 25′ 34″ O</text>
<rect x="574.5" y="662.8" width="100.5" height="12.6" rx="4" fill="#555553"/>
<text x="625" y="673" text-anchor="middle" letter-spacing="-0.15">PTV, NAVTEQ, AND</text>
</g>
</svg></body></html>
